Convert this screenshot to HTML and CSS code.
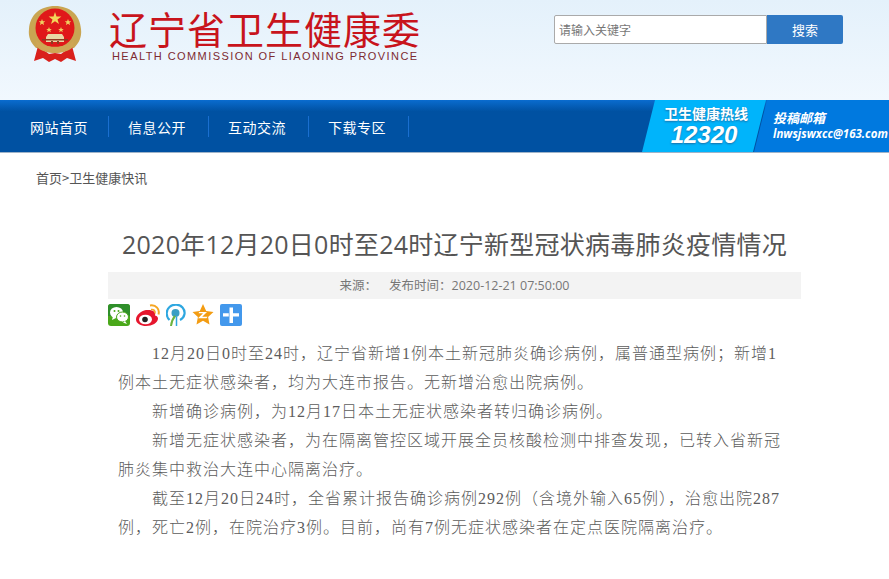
FILE: index.html
```html
<!DOCTYPE html>
<html lang="zh-CN">

<head>
    <meta charset="UTF-8">
    <title>2020年12月20日0时至24时辽宁新型冠状病毒肺炎疫情情况</title>
    <link rel="stylesheet" href="styles.css">
</head>

<body>

    <div class="header">
        <div class="logo">
            <svg class="emblem" width="54" height="58" viewBox="0 0 54 58">
                <path d="M27 0C12 0 2 9 1 23c-1 8 2 14 7 19l38 0c5-5 8-11 7-19C52 9 42 0 27 0z" fill="#c9a552"/>
                <circle cx="27" cy="22" r="19.500" fill="#e0181a"/>
                <path d="M10 40L6 55l9-3 6 4 6-3 6 3 6-4 9 3-4-15-11 8-6-1-6 1z" fill="#d9201c"/>
                <path d="M8 34c6 9 32 9 38 0l-1 7c-8 8-28 8-36 0z" fill="#cfa655"/>
                <path d="M27 6l1.500 4.600 4.900 0-3.900 2.900 1.500 4.600-4-2.800-4 2.800 1.500-4.600-3.900-2.900 4.900 0z" fill="#f3d65a"/>
                <path d="M14 13l.9 2.300 2.400 0-1.900 1.500.7 2.300-2.100-1.400-2.100 1.400.7-2.300-1.900-1.500 2.400 0zM40 13l.9 2.300 2.400 0-1.900 1.500.7 2.300-2.100-1.400-2.100 1.400.7-2.300-1.900-1.500 2.400 0zM21 21l.8 2 2 0-1.600 1.200.6 2-1.800-1.200-1.800 1.200.6-2-1.600-1.200 2 0zM33 21l.8 2 2 0-1.600 1.200.6 2-1.800-1.200-1.800 1.200.6-2-1.600-1.200 2 0z" fill="#f0cf62"/>
                <path d="M20 28h14l2 3v5H18v-5z" fill="#e9d8a6"/>
                <path d="M14 33h26v1.500H14zM23 35h2v3h-2zM29 35h2v3h-2z" fill="#8f3a22"/>
            </svg>
            <div class="logo-text">
                <div class="logo-cn">辽宁省卫生健康委</div>
                <div class="logo-en">HEALTH COMMISSION OF LIAONING PROVINCE</div>
            </div>
        </div>
        <form class="search">
            <input class="search-input" type="text" placeholder="请输入关键字">
            <button class="search-btn" type="button">搜索</button>
        </form>
    </div>

    <div class="nav">
        <ul class="nav-list">
            <li><a href="#">网站首页</a></li>
            <li><a href="#">信息公开</a></li>
            <li><a href="#">互动交流</a></li>
            <li><a href="#">下载专区</a></li>
        </ul>
        <div class="hotline">
            <div class="hotline-title">卫生健康热线</div>
            <div class="hotline-num">12320</div>
        </div>
        <div class="mailbox">
            <div class="mailbox-title">投稿邮箱</div>
            <div class="mailbox-addr">lnwsjswxcc@163.com</div>
        </div>
    </div>

    <div class="crumb">首页&gt;卫生健康快讯</div>

    <div class="article">
        <h1>2020年12月20日0时至24时辽宁新型冠状病毒肺炎疫情情况</h1>
        <div class="meta">
            <span>来源：</span>
            <span>发布时间：2020-12-21 07:50:00</span>
        </div>
        <div class="share">
            <svg width="22" height="22" viewBox="0 0 22 22">
                <rect width="22" height="22" rx="3" fill="#4aa81a"/>
                <path d="M0 3a3 3 0 0 1 3-3h16a3 3 0 0 1 3 3v9H0z" fill="#2f8f2a"/>
                <ellipse cx="8.500" cy="8.500" rx="6.500" ry="5.500" fill="#fff"/>
                <path d="M5 12l-1 4 4-2z" fill="#fff"/>
                <ellipse cx="14.500" cy="13" rx="6" ry="5" fill="#fff" stroke="#4aa81a"/>
                <path d="M17 17l2 3-4-1.500z" fill="#fff"/>
                <circle cx="6.500" cy="7" r="1" fill="#4aa81a"/><circle cx="10.500" cy="7" r="1" fill="#4aa81a"/>
                <circle cx="12.500" cy="12" r=".8" fill="#4aa81a"/><circle cx="16.500" cy="12" r=".8" fill="#4aa81a"/>
            </svg>
            <svg width="24" height="22" viewBox="0 0 24 22">
                <path d="M10 6C5 7 0 11 0 15.500 0 19.500 5 22 10 22c6 0 12-3 12-7.500 0-2-2-3-3-3 1-3-1-6-9-5.500z" fill="#e6162d"/>
                <ellipse cx="9.500" cy="15.500" rx="6.500" ry="4.800" fill="#fff"/>
                <circle cx="9" cy="15.500" r="2.800" fill="#222"/>
                <path d="M14 1.500c6-1 10 3.500 8.500 9" fill="none" stroke="#f5a623" stroke-width="2"/>
                <path d="M15 5.500c3-.5 4.500 1.500 4 4" fill="none" stroke="#f5a623" stroke-width="1.500"/>
            </svg>
            <svg width="20" height="22" viewBox="0 0 20 22">
                <path d="M3.500 16C-.5 12 0 6 3.500 3c4-3.500 10-3 13 .5 3.500 4 2.500 10-2.500 12.500" fill="none" stroke="#2ea7e0" stroke-width="2.200"/>
                <circle cx="9.500" cy="9" r="4" fill="#3a9fc4"/>
                <path d="M9 12C6.500 15 5.500 18 5 22" fill="none" stroke="#6db33f" stroke-width="2"/>
                <path d="M10.500 13v9" fill="none" stroke="#2ea7e0" stroke-width="1.500"/>
            </svg>
            <svg width="22" height="22" viewBox="0 0 22 22">
                <path d="M11 0l3.200 7 7.300.9-5.400 5 1.400 7.700-6.500-3.800-6.500 3.800 1.400-7.700-5.400-5L7.800 7z" fill="#f39c12"/>
                <path d="M7 8h8l-4.800 4.800H15.500l-1 1.500H6l5-5H6.700z" fill="#fff"/>
            </svg>
            <svg width="22" height="22" viewBox="0 0 22 22">
                <rect width="22" height="22" rx="2" fill="#4398ec"/>
                <path d="M9.500 3.500h3.500v15.500h-3.500zM13 9.300h6v3.200h-6zM3 9.300h5.800v3.200H3z" fill="#fff"/>
            </svg>
        </div>
        <div class="content">
            <p><span class="num">12</span>月<span class="num">20</span>日<span class="num">0</span>时至<span class="num">24</span>时，辽宁省新增<span class="num">1</span>例本土新冠肺炎确诊病例，属普通型病例；新增<span class="num">1</span>例本土无症状感染者，均为大连市报告。无新增治愈出院病例。</p>
            <p>新增确诊病例，为<span class="num">12</span>月<span class="num">17</span>日本土无症状感染者转归确诊病例。</p>
            <p>新增无症状感染者，为在隔离管控区域开展全员核酸检测中排查发现，已转入省新冠肺炎集中救治大连中心隔离治疗。</p>
            <p>截至<span class="num">12</span>月<span class="num">20</span>日<span class="num">24</span>时，全省累计报告确诊病例<span class="num">292</span>例（含境外输入<span class="num">65</span>例），治愈出院<span class="num">287</span>例，死亡<span class="num">2</span>例，在院治疗<span class="num">3</span>例。目前，尚有<span class="num">7</span>例无症状感染者在定点医院隔离治疗。</p>
        </div>
    </div>

</body>

</html>
```

FILE: styles.css
```css
* {
    box-sizing: border-box;
}

html,
body {
    overflow: hidden;
}

body {
    margin: 0;
    background-color: white;
    font-family: "Noto Sans CJK SC", sans-serif;
    color: #555;
}

.header {
    display: flex;
    justify-content: space-between;
    height: 100px;
    padding: 6px 46px 0 28px;
    background: linear-gradient(180deg, #e4f1fb 0%, #f1f8fe 100%);
}

.logo {
    display: flex;
    align-items: flex-start;
}

.emblem {
    margin-right: 27px;
}

.logo-text {
    margin-top: 3px;
}

.logo-cn {
    width: 312px;
    font-size: 38px;
    line-height: 38px;
    letter-spacing: 1px;
    white-space: nowrap;
    color: #c8141c;
}

.logo-en {
    margin: 3px 0 0 3px;
    font-family: "Liberation Sans", sans-serif;
    font-size: 11px;
    line-height: 13px;
    letter-spacing: 1.43px;
    white-space: nowrap;
    color: #7d2a30;
}

.search {
    display: flex;
    margin-top: 9px;
    height: 29px;
}

.search-input {
    width: 213px;
    height: 29px;
    padding: 0 4px;
    border: 1px solid #aaa;
    border-radius: 2px 0 0 2px;
    background-color: white;
    font-family: inherit;
    font-size: 12px;
    outline: none;
}

.search-input::placeholder {
    color: #777;
}

.search-btn {
    width: 76px;
    height: 29px;
    border: none;
    border-radius: 0 2px 2px 0;
    background-color: #2f78c4;
    color: white;
    font-family: inherit;
    font-size: 13px;
}

.nav {
    display: flex;
    height: 53px;
    overflow: hidden;
    background: linear-gradient(180deg, #0a6ccf 0%, #0051a2 22%, #0051a2 100%);
    border-bottom: 1px solid #9fb3c8;
}

.nav-list {
    display: flex;
    flex: none;
    width: 642px;
    margin: 0;
    padding: 16px 0 0 0;
    list-style: none;
}

.nav-list li {
    width: 100px;
    height: 21px;
    padding-left: 19px;
    border-right: 1px solid #1a6fd0;
    line-height: 21px;
}

.nav-list li:first-child {
    width: 109px;
    padding-left: 30px;
}

.nav-list a {
    color: white;
    font-size: 14px;
    letter-spacing: 0.5px;
    white-space: nowrap;
    text-decoration: none;
}

.hotline {
    flex: none;
    width: 124px;
    padding: 4px 0 0 22px;
    background-color: #00b4fb;
    clip-path: polygon(13px 0, 100% 0, calc(100% - 13px) 100%, 0 100%);
    color: white;
    text-align: center;
}

.hotline-title {
    width: 84px;
    font-size: 14px;
    line-height: 18px;
    font-weight: bold;
    white-space: nowrap;
    text-shadow: 0 1px 2px #1a6fa8;
}

.hotline-num {
    width: 80px;
    font-family: "Liberation Sans", sans-serif;
    font-size: 24px;
    line-height: 26px;
    font-style: italic;
    font-weight: bold;
    text-shadow: 0 1px 2px #1a6fa8;
}

.mailbox {
    flex: 1;
    min-width: 0;
    margin-left: -12px;
    padding: 9px 0 0 19px;
    background-color: #0079df;
    clip-path: polygon(13px 0, 100% 0, 100% 100%, 0 100%);
    color: white;
    white-space: nowrap;
}

.mailbox-title {
    font-size: 13px;
    line-height: 18px;
    font-weight: bold;
    font-style: italic;
}

.mailbox-addr {
    font-family: "Open Sans", sans-serif;
    font-size: 11.5px;
    line-height: 14px;
    font-weight: bold;
    font-style: italic;
}

.crumb {
    padding: 16px 0 0 36px;
    font-size: 13px;
    line-height: 18px;
    color: #555;
}

.article {
    width: 693px;
    margin: 39px 0 0 108px;
}

.article h1 {
    margin: 0;
    font-family: "Open Sans", "Noto Sans CJK SC", sans-serif;
    font-size: 25px;
    line-height: 36px;
    letter-spacing: 0.25px;
    font-weight: normal;
    text-align: center;
    white-space: nowrap;
    color: #555;
}

.meta {
    display: flex;
    justify-content: center;
    gap: 12px;
    height: 27px;
    margin-top: 10px;
    background-color: #f3f3f3;
    font-family: "Open Sans", "Noto Sans CJK SC", sans-serif;
    font-size: 12.5px;
    line-height: 27px;
    color: #777;
}

.share {
    display: flex;
    align-items: center;
    gap: 6px;
    height: 22px;
    margin-top: 5px;
}

.content {
    width: 672px;
    margin: 12px 0 0 10px;
    font-size: 16px;
    font-weight: 300;
    line-height: 29px;
    letter-spacing: 1px;
    color: #5c5c5c;
}

.content p {
    margin: 0;
    text-indent: 34px;
}

.num {
    font-family: "Liberation Serif", serif;
    line-height: 1;
}
```
